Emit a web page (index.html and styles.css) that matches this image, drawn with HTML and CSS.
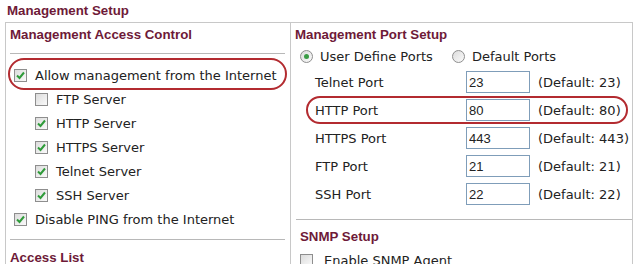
FILE: index.html
```html
<!DOCTYPE html>
<html lang="en">

<head>
    <meta charset="UTF-8">
    <title>Management Setup</title>
    <link rel="stylesheet" href="styles.css">
</head>

<body>
    <h1 class="page-title">Management Setup</h1>
    <div class="setup">
        <div class="col col-left">
            <h2 class="sec-title">Management Access Control</h2>
            <hr class="rule rule-top">
            <div class="row row-main marked">
                <span class="cb on"><svg viewBox="0 0 11 11"><path d="M2 5.5 L4.5 8 L9 2.5"/></svg></span>
                <span>Allow management from the Internet</span>
            </div>
            <div class="row row-sub">
                <span class="cb"></span><span>FTP Server</span>
            </div>
            <div class="row row-sub">
                <span class="cb on"><svg viewBox="0 0 11 11"><path d="M2 5.5 L4.5 8 L9 2.5"/></svg></span><span>HTTP Server</span>
            </div>
            <div class="row row-sub">
                <span class="cb on"><svg viewBox="0 0 11 11"><path d="M2 5.5 L4.5 8 L9 2.5"/></svg></span><span>HTTPS Server</span>
            </div>
            <div class="row row-sub">
                <span class="cb on"><svg viewBox="0 0 11 11"><path d="M2 5.5 L4.5 8 L9 2.5"/></svg></span><span>Telnet Server</span>
            </div>
            <div class="row row-sub">
                <span class="cb on"><svg viewBox="0 0 11 11"><path d="M2 5.5 L4.5 8 L9 2.5"/></svg></span><span>SSH Server</span>
            </div>
            <div class="row row-main">
                <span class="cb on"><svg viewBox="0 0 11 11"><path d="M2 5.5 L4.5 8 L9 2.5"/></svg></span>
                <span>Disable PING from the Internet</span>
            </div>
            <hr class="rule rule-bottom">
            <h2 class="sec-title">Access List</h2>
        </div>

        <div class="col col-right">
            <h2 class="sec-title">Management Port Setup</h2>
            <div class="radios">
                <span class="radio on"></span><span class="radio-label">User Define Ports</span>
                <span class="radio"></span><span>Default Ports</span>
            </div>
            <div class="port">
                <span class="port-name">Telnet Port</span>
                <input class="port-input" type="text" value="23">
                <span>(Default: 23)</span>
            </div>
            <div class="port marked">
                <span class="port-name">HTTP Port</span>
                <input class="port-input" type="text" value="80">
                <span>(Default: 80)</span>
            </div>
            <div class="port">
                <span class="port-name">HTTPS Port</span>
                <input class="port-input" type="text" value="443">
                <span>(Default: 443)</span>
            </div>
            <div class="port">
                <span class="port-name">FTP Port</span>
                <input class="port-input" type="text" value="21">
                <span>(Default: 21)</span>
            </div>
            <div class="port">
                <span class="port-name">SSH Port</span>
                <input class="port-input" type="text" value="22">
                <span>(Default: 22)</span>
            </div>
            <hr class="rule rule-snmp">
            <h2 class="sec-title snmp-title">SNMP Setup</h2>
            <div class="row snmp-row">
                <span class="cb"></span><span>Enable SNMP Agent</span>
            </div>
        </div>
    </div>
</body>

</html>
```

FILE: styles.css
```css
body {
    font-family: "DejaVu Sans", Verdana, sans-serif;
    font-size: 13px;
    color: #222;
    background-color: #fff;
    margin: 0;
    padding: 0 10px 0 5px;
    height: 264px;
    overflow: hidden;
}

.page-title {
    font-family: "Liberation Sans", Tahoma, sans-serif;
    font-size: 13.3px;
    font-weight: bold;
    color: #6e1a38;
    margin: 0;
    padding: 3px 0 0 2px;
    height: 19px;
}

.setup {
    display: grid;
    grid-template-columns: 284px 1fr;
    border: 1px solid #c8c8c8;
    border-bottom: none;
    height: 242px;
    overflow: hidden;
}

.col-right {
    border-left: 1px solid #c8c8c8;
}

.sec-title {
    font-family: "Liberation Sans", Tahoma, sans-serif;
    font-size: 13.3px;
    font-weight: bold;
    color: #6e1a38;
    margin: 0;
    height: 22px;
    line-height: 22px;
    padding: 1px 0 0 4px;
}

.rule {
    border: none;
    border-top: 1px solid #b8b8b8;
    margin: 0;
}

.rule-top {
    margin: 7px 5px 0 4px;
}

.rule-bottom {
    margin: 8px 5px 6px 4px;
}

.row {
    display: flex;
    align-items: center;
    height: 24px;
    gap: 8px;
}

.row-main {
    padding-left: 8px;
}

.row-main.marked {
    margin-top: 9px;
    margin-bottom: 0;
}

.row-sub {
    padding-left: 29px;
}

.marked {
    position: relative;
}

.marked::before {
    content: "";
    position: absolute;
    left: 2px;
    right: 3px;
    top: -5px;
    bottom: -3px;
    border: 2px solid #b32b30;
    border-radius: 16px;
}

.cb {
    width: 11px;
    height: 11px;
    border: 1px solid #8e8e8e;
    background: linear-gradient(135deg, #dcdcdc, #fafafa);
    flex: none;
}

.cb svg {
    display: block;
    width: 11px;
    height: 11px;
}

.cb svg path {
    fill: none;
    stroke: #2f9b3a;
    stroke-width: 2;
}

.radios {
    display: flex;
    align-items: center;
    height: 24px;
    padding-left: 9px;
    margin-top: -2px;
}

.radio {
    width: 11px;
    height: 11px;
    border: 1px solid #8e8e8e;
    border-radius: 50%;
    background: linear-gradient(135deg, #dcdcdc, #fafafa);
    margin-right: 7px;
    position: relative;
    flex: none;
}

.radio.on::after {
    content: "";
    position: absolute;
    left: 3px;
    top: 3px;
    width: 5px;
    height: 5px;
    border-radius: 50%;
    background: #3a9c45;
}

.radio-label {
    margin-right: 19px;
}

.port {
    display: flex;
    align-items: center;
    height: 28px;
    padding-left: 24px;
}

.port.marked::before {
    left: 15px;
    right: 4px;
    top: 0;
    bottom: 0;
}

.port-name {
    width: 151px;
}

.port-input {
    width: 64px;
    height: 22px;
    box-sizing: border-box;
    border: 1px solid #7f9db9;
    padding: 0 2px;
    margin: 0 8px 0 0;
    font-family: "Liberation Sans", Arial, sans-serif;
    font-size: 13px;
    color: #222;
}

.rule-snmp {
    margin: 11px 0 0 5px;
}

.snmp-title {
    margin-top: 5px;
    padding-left: 9px;
}

.snmp-row {
    padding-left: 9px;
    gap: 11px;
}
```
